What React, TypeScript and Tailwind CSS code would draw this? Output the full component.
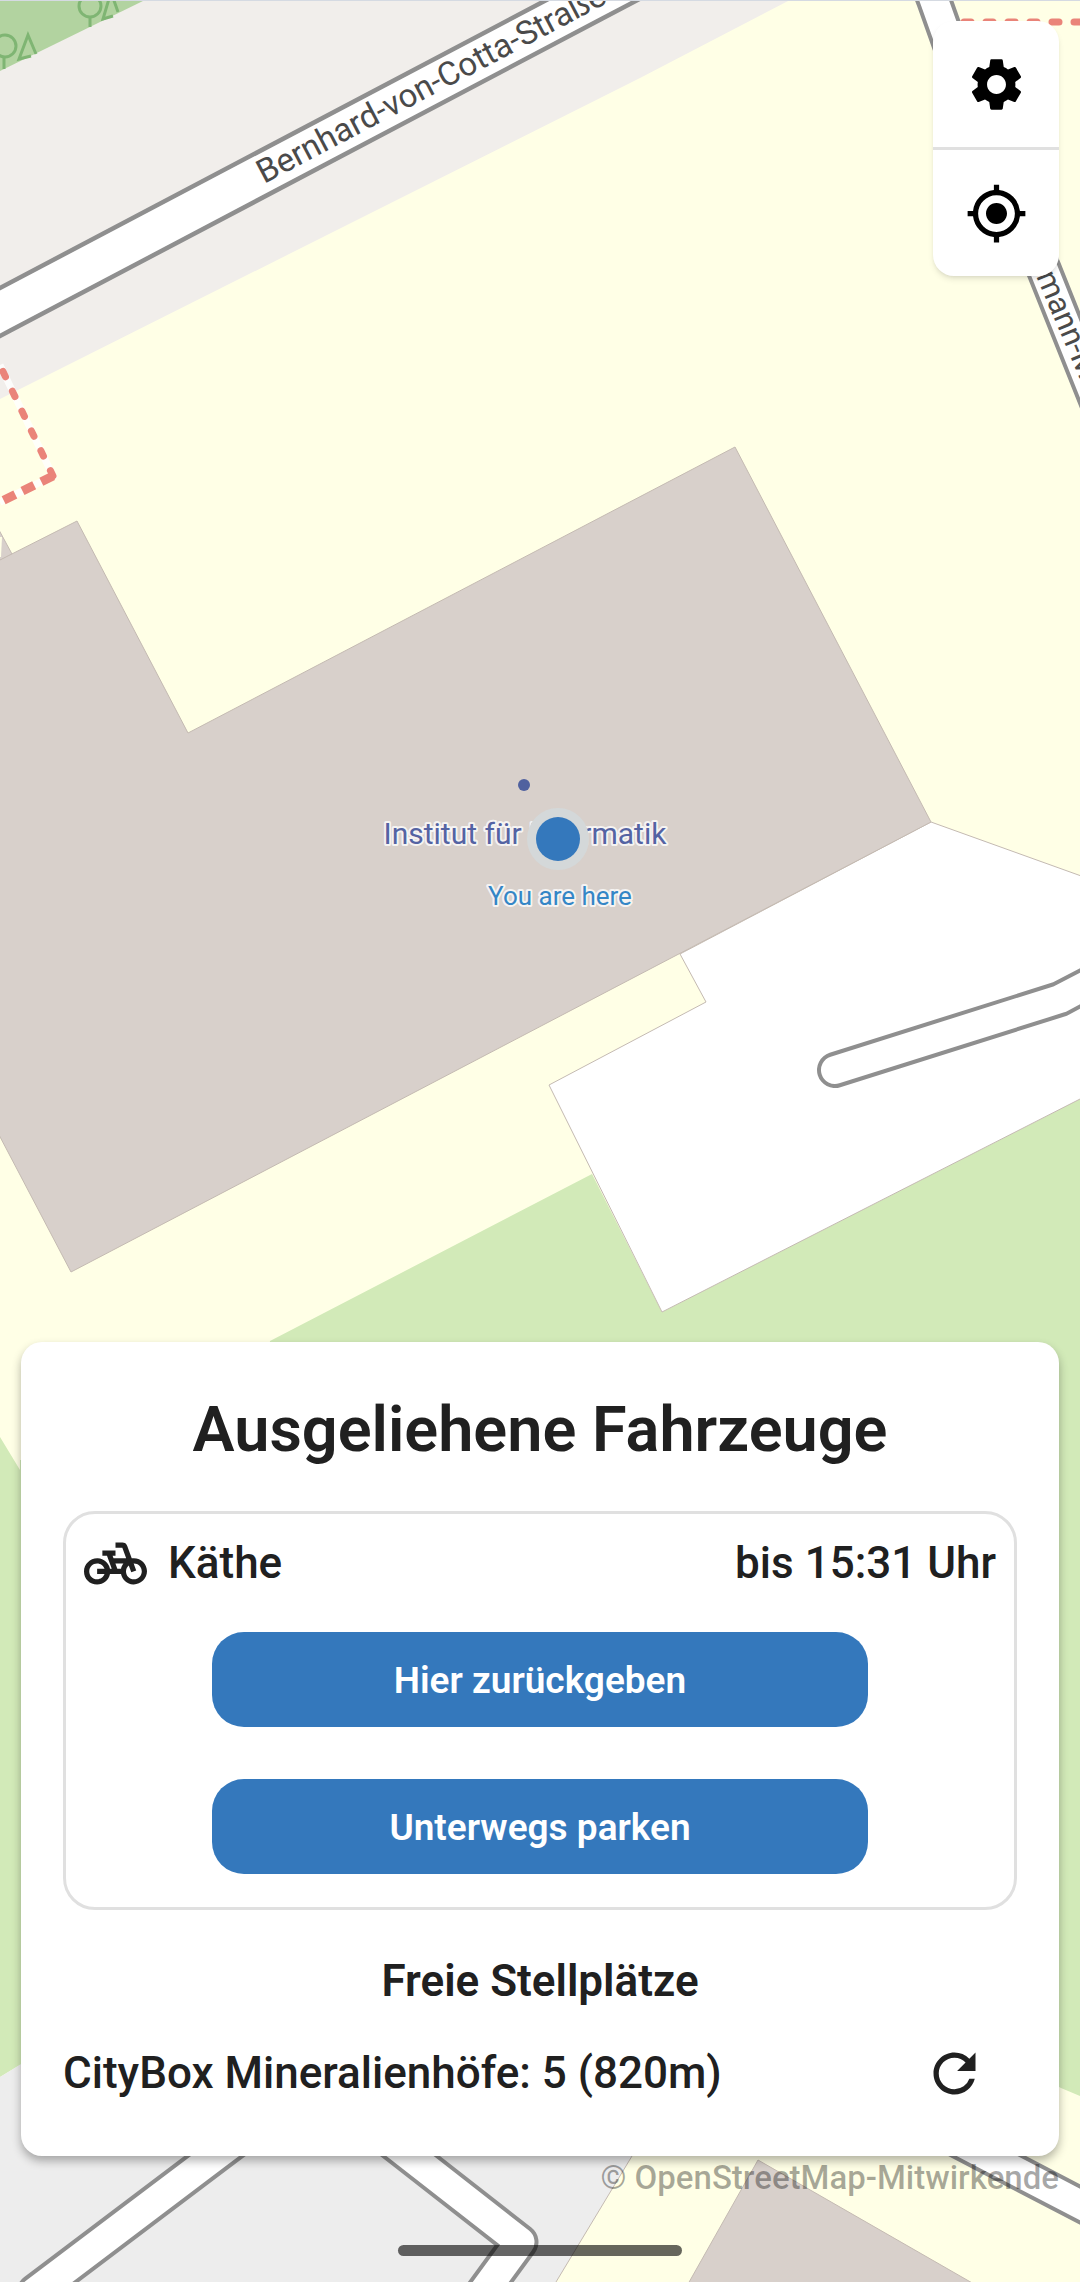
import { MdMyLocation, MdPedalBike, MdRefresh, MdSettings } from "react-icons/md";

// =========================================================
// Karte — Ausschnitt rund um das Institut für Informatik
// =========================================================

const farben = {
  schule: "#ffffe6",
  wohnen: "#f1eeeb",
  industrie: "#ededed",
  gras: "#d2eab8",
  wald: "#b2d3a0",
  baum: "#7fb573",
  gebaeude: "#d8d0cb",
  kontur: "#c4bab2",
  rand: "#8f8f8f",
  fussweg: "#ea8479",
};

const strassen = [
  { name: "cotta", d: "M-20 322.5 L0 312 L592 0 L630 -20", aussen: 47, innen: 38 },
  { name: "mann", d: "M928 -16 L934 0 L950 45 L1044 270 L1104 420", aussen: 36, innen: 28 },
  { name: "zufahrt", d: "M835 1070 L1060 999 L1100 978", aussen: 36, innen: 28 },
  { name: "west", d: "M281 2106 L215 2156 L35 2292", aussen: 37, innen: 29 },
  { name: "knick", d: "M346 2106 L410 2156 L520 2242 L482 2294", aussen: 37, innen: 29 },
  { name: "ost", d: "M890 2105 L987 2156 L1100 2215", aussen: 36, innen: 28 },
];

function Karte() {
  return (
    <svg
      className="absolute inset-0 h-full w-full"
      viewBox="0 0 1080 2282"
      preserveAspectRatio="xMidYMid slice"
      role="img"
      aria-label="Karte"
    >
      {/* Flächen */}
      <rect width="1080" height="2282" fill={farben.schule} />
      <path d="M0 0H790L640 78L24 387L0 399Z" fill={farben.wohnen} />
      <path d="M0 0H145L0 71Z" fill={farben.wald} />
      <path
        d="M270 1341L592 1174L662 1312L1080 1099V2096L1061 2088L700 1900H20V2065L0 2077V1437L20 1470L200 1800Z"
        fill={farben.gras}
      />
      <path d="M20 1460V2065H200V1460Z" fill={farben.gras} />
      <path d="M0 2077L60 2040H700L632 2156L556 2282H0Z" fill={farben.industrie} />
      <path d="M632 2156L556 2282" stroke={farben.kontur} strokeWidth="1" />

      {/* Bäume */}
      <g fill="none" stroke={farben.baum} strokeWidth="3">
        <circle cx="5" cy="46" r="11" />
        <path d="M4 57V69M36 54L28 35L19 59L31 56" />
        <circle cx="90" cy="6" r="11" />
        <path d="M90 17V27M118 12L111 -8L103 19L113 16" />
      </g>

      {/* Platz und Gebäude */}
      <g stroke={farben.kontur} strokeWidth="1">
        <path
          d="M931 822L1084 877V1097L662 1312L549 1085L706 1002L680 954Z"
          fill="#ffffff"
        />
        <path d="M-1 530L12 554L-1 561Z" fill={farben.gebaeude} />
        <path
          d="M-2 561L77 521L188 733L735 447L931 822L71 1272L-2 1133Z"
          fill={farben.gebaeude}
        />
        <path d="M758 2160L974 2284H688Z" fill={farben.gebaeude} />
      </g>
      <path d="M0 537H2L1 557H0Z" fill={farben.schule} />

      {/* Straßen: erst alle Ränder, dann die Fahrbahn */}
      <g fill="none" stroke={farben.rand} strokeLinecap="round" strokeLinejoin="round">
        {strassen.map((s) => (
          <path key={s.name} d={s.d} strokeWidth={s.aussen} />
        ))}
      </g>
      <g fill="none" stroke="#ffffff" strokeLinecap="round" strokeLinejoin="round">
        {strassen.map((s) => (
          <path key={s.name} d={s.d} strokeWidth={s.innen} />
        ))}
      </g>

      {/* Fußwege */}
      <g fill="none">
        <path d="M0 365L53 476L0 502" stroke="#ffffff" strokeOpacity="0.8" strokeWidth="7" />
        <g stroke={farben.fussweg}>
          <path
            d="M53 476L-4 357"
            strokeWidth="7"
            strokeLinecap="round"
            strokeDasharray="6 16"
          />
          <path d="M53 476L-4 504" strokeWidth="9" strokeDasharray="13 8" />
          <path
            d="M964 22H1090"
            strokeWidth="7"
            strokeLinecap="round"
            strokeDasharray="7 15"
          />
        </g>
      </g>

      {/* Beschriftung */}
      <g className="font-[Roboto,sans-serif]" fill="#4a4a4a">
        <text transform="translate(264 184) rotate(-27.8)" fontSize="33">
          Bernhard-von-Cotta-Straße
        </text>
        <text transform="translate(1036 276) rotate(67)" fontSize="31">
          mann-M
        </text>
      </g>
      <g
        className="font-[Roboto,sans-serif]"
        textAnchor="middle"
        stroke="#ffffff"
        strokeOpacity="0.75"
        strokeWidth="4"
        strokeLinejoin="round"
        paintOrder="stroke"
      >
        <text x="525" y="844" fontSize="30" fill="#5463a3">
          Institut für Informatik
        </text>
        <text x="560" y="905" fontSize="26" fill="#3486c6">
          You are here
        </text>
      </g>

      {/* Standort */}
      <circle cx="524" cy="785" r="6" fill="#50619f" />
      <circle cx="558" cy="839" r="31" fill="#d4d8d9" />
      <circle cx="558" cy="839" r="22" fill="#3478bc" />

      <path d="M0 0H1080V1H0Z" fill="#d5dae2" />
    </svg>
  );
}

// =========================================================
// Ausgeliehene Fahrzeuge und freie Stellplätze
// =========================================================

const fahrzeuge = [{ name: "Käthe", bis: "bis 15:31 Uhr" }];

const aktionen = ["Hier zurückgeben", "Unterwegs parken"];

const stellplaetze = [{ name: "CityBox Mineralienhöfe", frei: 5, distanz: "820m" }];

export default function App() {
  return (
    <main className="relative flex min-h-screen flex-col justify-between overflow-hidden px-[21px] pt-[21px] pb-[26px] font-[Roboto,sans-serif] text-[#202020]">
      <Karte />

      {/* Kartensteuerung */}
      <div className="relative flex w-[126px] flex-col divide-y-3 divide-[#e0e0e0] self-end overflow-hidden rounded-[21px] bg-white text-black shadow-md">
        <button
          type="button"
          aria-label="Einstellungen"
          className="flex h-[129px] items-center justify-center"
        >
          <MdSettings className="size-[63px]" />
        </button>
        <button
          type="button"
          aria-label="Mein Standort"
          className="flex h-[126px] items-center justify-center"
        >
          <MdMyLocation className="size-[63px]" />
        </button>
      </div>

      <div className="relative flex flex-col">
        <section className="flex flex-col rounded-[21px] bg-white px-[42px] pt-[43px] pb-[23px] shadow-[0_5px_10px_rgba(0,0,0,0.3)]">
          <h1 className="text-center text-[63px] leading-[90px] font-semibold">
            Ausgeliehene Fahrzeuge
          </h1>

          {fahrzeuge.map((fahrzeug) => (
            <article
              key={fahrzeug.name}
              className="mt-[36px] rounded-[32px] border-3 border-[#e0e0e0] px-[18px] pt-[18px] pb-[33px]"
            >
              <div className="flex items-center gap-[21px] text-[44px] leading-[63px] font-medium">
                <MdPedalBike className="size-[63px] shrink-0" />
                <span>{fahrzeug.name}</span>
                <span className="ml-auto">{fahrzeug.bis}</span>
              </div>
              <div className="mt-[37px] flex flex-col items-center gap-[52px]">
                {aktionen.map((aktion) => (
                  <button
                    key={aktion}
                    type="button"
                    className="h-[95px] w-[656px] max-w-full rounded-[32px] bg-[#3478bc] pt-[3px] text-[37px] leading-[52px] font-semibold text-white"
                  >
                    {aktion}
                  </button>
                ))}
              </div>
            </article>
          ))}

          <h2 className="mt-[40px] text-center text-[44px] leading-[63px] font-semibold">
            Freie Stellplätze
          </h2>
          {stellplaetze.map((platz) => (
            <div key={platz.name} className="flex items-center justify-between">
              <p className="text-[44px] leading-[63px] font-medium">
                {platz.name}: {platz.frei} ({platz.distanz})
              </p>
              <button
                type="button"
                aria-label="Aktualisieren"
                className="flex h-[120px] w-[126px] shrink-0 items-center justify-center"
              >
                <MdRefresh className="size-[63px]" />
              </button>
            </div>
          ))}
        </section>

        <a
          href="https://www.openstreetmap.org/copyright"
          className="self-end text-[33px] leading-[44px] font-medium text-black/35"
        >
          © OpenStreetMap-Mitwirkende
        </a>
        <div className="mt-[45px] h-[11px] w-[284px] self-center rounded-full bg-black/60" />
      </div>
    </main>
  );
}
